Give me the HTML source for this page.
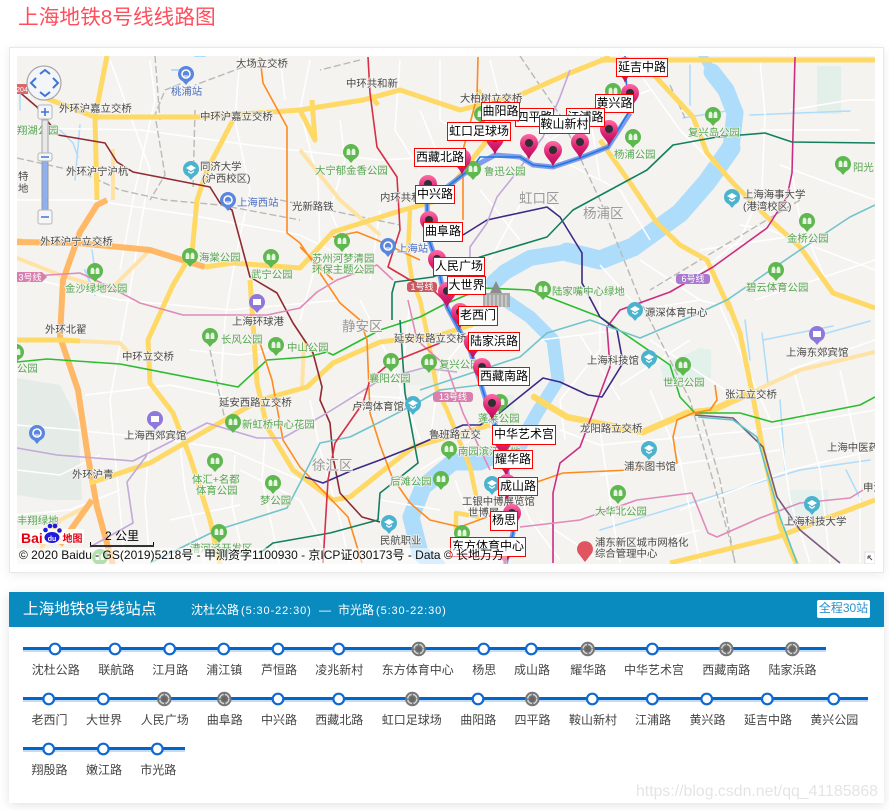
<!DOCTYPE html>
<html lang="zh-CN"><head><meta charset="utf-8"><title>上海地铁8号线线路图</title>
<style>
html,body{margin:0;padding:0;background:#fff;width:889px;height:810px;overflow:hidden}
body{position:relative;font-family:"Liberation Sans","Noto Sans CJK SC",sans-serif}
h1{position:absolute;left:18px;top:4px;margin:0;font-weight:400;font-size:20.7px;line-height:28px;color:#ff4d5c;white-space:nowrap}
.card1{position:absolute;left:9px;top:47px;width:875px;height:526px;box-sizing:border-box;background:#fff;border:1px solid #e8e8e8;box-shadow:0 2px 10px rgba(0,0,0,.08)}
.card2{position:absolute;left:9px;top:592px;width:875px;height:211px;background:#fff;box-shadow:0 2px 10px rgba(0,0,0,.12)}
.bar{position:absolute;left:9px;top:592px;width:875px;height:35px;background:#0a8bc0}
.t{position:absolute;color:#fff;white-space:nowrap}
.tag{position:absolute;left:817px;top:600px;width:53px;height:18px;background:#fff;border-radius:2px;color:#2a90c8;font-size:12px;line-height:17px;text-align:center}
#map{position:absolute;left:17px;top:56px;width:858px;height:508px;overflow:hidden;background:#f4f3f0}
#map svg{position:absolute;left:0;top:0}
.l{position:absolute;box-sizing:border-box;background:#fff;border:1px solid #f00;color:#000;font-size:12px;line-height:16px;text-align:center;white-space:nowrap;overflow:hidden}
.wm{position:absolute;left:636px;top:781px;font-size:15.85px;line-height:22px;color:rgba(170,170,170,.32);white-space:nowrap}
.copy{position:absolute;z-index:5;left:0;top:492px;width:490px;height:16px;padding-left:2px;box-sizing:border-box;background:rgba(255,255,255,.55);color:#111;font-size:12px;line-height:15px;white-space:nowrap}
</style></head><body>
<h1>上海地铁8号线线路图</h1>
<div class="card1"></div>
<div id="map">
<svg width="858" height="508" viewBox="17 56 858 508" xmlns="http://www.w3.org/2000/svg">
<defs>
<linearGradient id="mg" x1="0" y1="0" x2="0" y2="1"><stop offset="0" stop-color="#ff6aa5"/><stop offset=".55" stop-color="#d8206f"/><stop offset="1" stop-color="#b80d58"/></linearGradient>
<g id="m"><path d="M0,17C-2,10-9,7-9,0A9,9 0 1 1 9,0C9,7 2,10 0,17Z" fill="url(#mg)"/><circle r="4" cy="0" fill="#2f2f33"/></g>
<g id="pg"><circle r="8" fill="#5eb84f"/><path d="M0,11L-5,5L5,5Z" fill="#5eb84f"/><path d="M-4.4,3V-1A2,3.5 0 0 1 -0.6,-1V3ZM0.6,3V-1A2,3.5 0 0 1 4.4,-1V3Z" fill="#e7f5e3"/></g>
<g id="pb"><circle r="8" fill="#5a86e0"/><path d="M0,11L-5,5L5,5Z" fill="#5a86e0"/><circle r="4" fill="none" stroke="#fff" stroke-width="1.6"/><path d="M-2,2h4" stroke="#fff"/></g>
<g id="pt"><circle r="8" fill="#4cb3cf"/><path d="M0,11L-5,5L5,5Z" fill="#4cb3cf"/><path d="M-5,-1L0,-4L5,-1L0,2Z M-3,1.5L0,3.5L3,1.5V3L0,5L-3,3Z" fill="#fff"/></g>
<g id="pp"><circle r="8" fill="#8f78dc"/><path d="M0,11L-5,5L5,5Z" fill="#8f78dc"/><path d="M-4,-3h8v6h-8z" fill="#fff"/></g>
</defs>
<!-- park tints -->
<path d="M17,378L60,385L78,420L82,500L50,500L17,495Z" fill="#e5ebe6"/>
<path d="M817,66h24v48h-24z" fill="#e3f0ea"/>
<path d="M660,366L700,348L711,350L711,378L665,385Z" fill="#e2f1ea"/>
<path d="M400,370h40v15h-40z" fill="#eef0ec"/>
<path d="M788,490h40v30h-40z" fill="#e6f1ee"/>
<path d="M500,395h14v30h-14z" fill="#e7f1e6"/>
<!-- water -->
<g fill="none" stroke="#aedcfb" stroke-linejoin="round" stroke-linecap="round">
<path d="M703,56L712,72" stroke-width="9"/>
<path d="M712,72L726,90L735,113L731,148" stroke-width="17"/>
<path d="M731,148L707,182L680,213L633,247L600,260L567,252" stroke-width="19"/>
<path d="M567,252L530,258L505,272L494,282" stroke-width="16"/>
<path d="M505,300L530,317L553,340L558,380L537,413L520,443" stroke-width="13"/>
<path d="M520,443L480,462L453,462L423,487L411,517L420,553L437,566" stroke-width="17"/>
<path d="M92,250l2,14M55,125l18,18l5,14M80,125l-5,55M20,90l0,20" stroke-width="1.5"/>
<path d="M690,65l0,40M683,118l50,-8M750,115l100,-4M745,320l5,40M762,333l6,50M763,340l70,-14M820,335l50,-14M600,530l100,-30l100,-30l70,-10M780,400l5,70M846,470l15,30" stroke-width="1.5"/>
<path d="M172,70h14M195,56l10,0M85,270l10,25" stroke-width="2"/>
</g>
<!-- minor roads -->
<g fill="none" stroke="#fff" stroke-width="1.5">
<path d="M17,128L140,130L250,145L380,160L470,155M110,60L150,170L130,290L110,400L125,565"/>
<path d="M17,200L90,200L190,215L300,235L340,255M17,275L120,300L230,310L340,300"/>
<path d="M150,60L155,100L135,190L120,270M240,56L235,120L250,190L235,260L225,320L220,400M310,60L300,110L318,180L320,250L300,320"/>
<path d="M17,425L75,430L170,440L230,450L300,480M85,395L170,385L240,400M190,350L240,355L300,345M150,430L145,500L150,565M180,445L185,490L205,565"/>
<path d="M17,470L60,475L100,455M17,515L70,510L120,490M235,455L232,505L245,565M265,440L262,480L280,565M310,400L320,450L340,520L350,565"/>
<path d="M340,120L345,160L330,210L350,260M400,60L395,130L420,170M440,60L440,120L470,140M490,60L500,100L550,140L600,110L650,90M560,160L620,190L650,240M540,190L570,230M590,115L600,180"/>
<path d="M630,60L680,130L720,170M760,60L765,115L762,190L740,240L690,280M790,110L850,100L875,100M760,130L860,130M790,160L800,220L830,290M740,225L770,230L875,270M780,165L875,200"/>
<path d="M700,250L800,235M640,260L700,300L720,305M755,300L875,260M650,340L740,400M720,306L770,420M620,385L690,340M790,370L875,340M795,375L820,470L830,563"/>
<path d="M600,430L610,500L620,563M650,390L680,460L700,563M560,430L600,445L760,430L875,410M600,475L780,450M540,520L600,560M680,510L790,470L875,450"/>
<path d="M780,430L790,500L810,563M720,480L735,563M840,370L860,460L860,563M640,545L700,530M480,190L520,240M520,205L490,260M420,110L440,160M380,210L370,280M410,300L400,400"/>
<path d="M480,320L440,370L430,440M360,300L390,360L420,440M350,395L440,400M420,470L470,440M500,450L530,520L560,560M565,440L560,400L600,350L600,300M540,340L620,330M455,480L470,520M380,500L440,510"/>
<path d="M600,265L640,310L700,300M580,335L620,400M280,56L285,100M240,470L300,500L330,560M170,520L240,505"/>
</g>
<!-- rail -->
<g fill="none" stroke="#b9b9b6" stroke-width="1.4" stroke-dasharray="7 3">
<path d="M17,158L80,172L120,190L165,200L220,205L300,220M190,80L165,90L155,115L165,175L150,200M155,56L160,120"/>
<path d="M195,110L193,190M210,350L225,420M262,60L195,85M360,60L320,70M520,56L560,115L600,200L640,300L690,400L730,540L735,563M670,85L685,118M280,200L400,225"/>
<path d="M700,410L720,480L735,563M800,200L700,260L650,290"/>
</g>
<!-- main roads -->
<g fill="none" stroke-linejoin="round" stroke-linecap="butt">
<g stroke="#ffe3a6" stroke-width="4">
<path d="M113,149L113,200M17,258L60,275L110,290L150,250M80,341L120,343L135,360M40,550L60,520L90,505M750,393L800,370L875,352M300,150L340,200L380,235M17,240h5"/>
<path d="M304,340l-2,50"/>
</g>
<g stroke="#ffb866" stroke-width="6">
<path d="M107,200L97,205L80,232L63,280L60,337L78,390L88,457L97,507L113,565"/>
<path d="M17,242L77,243L150,250L205,267"/>
<path d="M60,545L92,500"/>
</g>
<g stroke="#ffd966" stroke-width="5">
<path d="M107,56L95,117L97,200"/>
<path d="M43,97L95,117L143,117L200,117L300,110L363,100L400,90L460,110L520,95L570,73L610,57"/>
<path d="M233,120L207,170L197,200L192,253L173,285L148,340L150,383L173,413L190,457L210,520L220,565"/>
<path d="M205,267L233,263L300,268L333,232L403,210"/>
<path d="M17,340L63,340L80,341"/>
<path d="M90,483L150,463L207,430L260,400L307,387L333,363L380,342L440,335L480,322"/>
<path d="M250,280L257,383L267,427L293,470L333,500L350,497L380,473L413,447L490,425"/>
<path d="M534,397L567,417L597,423L643,432L687,413L713,410L750,393" stroke-width="6.5" stroke-linecap="round"/>
<path d="M727,300L740,333L753,397L763,450L780,527L797,565"/>
<path d="M600,140L633,187L657,223L680,245L707,260L730,310"/>
<path d="M640,60L693,117L707,153L733,183L767,217L800,247L833,293L875,308"/>
<path d="M600,60L713,60L875,60"/>
<path d="M670,563L777,537L875,500"/>
<path d="M478,90L495,130L460,175L440,200L403,210"/>
<path d="M410,210L408,253L412,280L420,300L427,333L437,390L447,410L470,467L477,500" stroke-width="4.5"/>
<path d="M456,530V513L480,517" stroke-width="4.5"/>
<path d="M370,95L378,105"/>
<path d="M300,110L315,140L312,100"/>
</g>
</g>
<!-- metro lines -->
<g fill="none" stroke-width="1.6" stroke-linejoin="round">
<path stroke="#8f2a30" d="M17,90L37,107L58,135L105,143L117,162L133,172L210,187L220,203L232,210L250,277L277,293L293,323L313,353L322,387L320,400L330,423L333,457L340,493L362,517L380,522"/>
<path stroke="#2bbd2e" d="M17,362L47,359L120,364L238,387L267,360L307,357L327,352L333,355L380,330L420,317L443,305L483,288L530,290L600,317L670,365L680,397L695,413L740,413L772,422L860,405L875,397"/>
<path stroke="#ff8a1e" d="M260,57L263,83L287,127L287,233L300,243L340,303L360,320L367,340L370,413L380,445L392,477L410,503L430,520L460,527L487,517M333,237L357,232L377,240L420,260M478,57L477,97L463,150L463,220M260,343L272,380L283,440L300,467L348,517L362,563M537,482L563,473L630,470L677,463L673,437L677,420L693,413L710,410L717,400L715,385M333,280L300,247"/>
<path stroke="#cc2d82" d="M795,57L792,173L787,197L767,228L713,267L670,292L620,310L607,327L610,367L580,447L560,463L553,493L553,563"/>
<path stroke="#3d2a87" d="M463,235L487,220L547,207L560,217L582,253L582,283L600,317L617,330L623,363L602,397L588,395L560,382L543,378L497,415L480,425L463,425L413,447L380,460L353,470L323,483L305,477"/>
<path stroke="#12805f" d="M392,320L392,293L395,282L433,277L480,257L547,237L573,210L647,170L673,145L717,137L765,133L792,142L875,143M400,320L405,393L418,463L380,493L378,520L330,533L273,543L260,553"/>
<path stroke="#72c4cc" d="M150,563L217,530L287,508L300,483L320,443L350,437L380,422L417,403L440,390L480,385M520,357L547,333L590,320L640,338L690,317L727,300L800,250L850,217L875,205M420,390L520,357"/>
<path stroke="#df8ab8" d="M17,277L80,273L110,287L140,303L183,315L267,315L300,308L317,292L337,280L377,265L393,280M408,300L417,340L447,367L463,413L490,470M520,527L580,520L637,500L692,493L708,533L717,537L760,518L800,503L850,498L863,490"/>
<path stroke="#c3a8d8" d="M17,448L57,455L133,461L207,423L257,438L283,438L327,413L380,380L423,368L457,372M570,70L560,97L543,137L513,177L497,197L487,223L470,247L470,263M147,455L127,482L133,523L90,547"/>
<path stroke="#d62f46" d="M368,57L370,93L377,147L397,177L400,230L388,267L410,280L433,290L447,303M440,343L390,363L370,380L363,403L335,443L328,480L323,563"/>
<path stroke="#7a5a80" d="M695,415L733,418L763,447L777,497L800,530L840,563"/>
<path stroke="#5cc5c8" d="M698,417L733,420L757,437L780,517L797,563"/>
</g>
<!-- line 8 route -->
<g fill="none" stroke-linejoin="round">
<path stroke="#6c8cea" stroke-opacity=".85" stroke-width="5" d="M630,113L608,147L580,158L553,167L533,165L520,157L495,155L473,167L447,187L427,203L428,237L437,263L447,307L470,350L490,413L503,443L513,513L513,533L505,565"/>
<path stroke="#1c7ae0" stroke-width="1.6" d="M625,56L628,113L608,147L580,158L553,167L533,165L520,157L480,157L473,167L447,187L427,203L428,237L437,263L447,307L470,350L490,413L503,443L513,513L513,533L505,565"/>
</g>
<!-- badges -->
<g font-size="9" text-anchor="middle" fill="#fff">
<rect x="407" y="282" width="30" height="10" rx="3" fill="#c85a62"/><text x="422" y="290">1号线</text>
<rect x="433" y="392" width="40" height="10" rx="3" fill="#d87fae"/><text x="453" y="400">13号线</text>
<rect x="676" y="274" width="34" height="10" rx="3" fill="#a97ad0"/><text x="693" y="282">6号线</text>
<path d="M17,272h25l5,5l-5,5h-25z" fill="#d87fae"/><text x="30" y="280.5">3号线</text>
<rect x="17" y="84" width="11" height="10" fill="#d9686c"/><text x="22" y="92" font-size="7">204</text>
</g>
<!-- people's square building -->
<g fill="#a9a9a9"><path d="M483,307h27v-14h-27z"/><path d="M490,293l6,-12l6,12z" fill="#8c8c8c"/><path d="M486,295v12M490,295v12M494,295v12M498,295v12M502,295v12M506,295v12" stroke="#e5e5e5"/></g>
<!-- POI pins -->
<use href="#pg" x="190" y="256"/><use href="#pg" x="271" y="257"/><use href="#pg" x="95" y="271"/><use href="#pg" x="351" y="152"/><use href="#pg" x="342" y="241"/><use href="#pg" x="473" y="169"/><use href="#pg" x="543" y="289"/><use href="#pg" x="482" y="114"/><use href="#pg" x="633" y="137"/><use href="#pg" x="613" y="91"/><use href="#pg" x="713" y="115"/><use href="#pg" x="843" y="164"/><use href="#pg" x="807" y="221"/><use href="#pg" x="776" y="270"/><use href="#pg" x="683" y="365"/><use href="#pg" x="618" y="493"/><use href="#pg" x="210" y="336"/><use href="#pg" x="276" y="345"/><use href="#pg" x="233" y="422"/><use href="#pg" x="215" y="461"/><use href="#pg" x="273" y="483"/><use href="#pg" x="219" y="532"/><use href="#pg" x="16" y="352"/><use href="#pg" x="100" y="557"/><use href="#pg" x="391" y="361"/><use href="#pg" x="429" y="362"/><use href="#pg" x="449" y="449"/><use href="#pg" x="441" y="479"/><use href="#pg" x="462" y="533"/><use href="#pg" x="500" y="402"/>
<use href="#pb" x="186" y="74"/><use href="#pb" x="228" y="200"/><use href="#pb" x="388" y="246"/><use href="#pb" x="37" y="433"/>
<use href="#pt" x="191" y="169"/><use href="#pt" x="732" y="197"/><use href="#pt" x="389" y="523"/><use href="#pt" x="413" y="404"/><use href="#pt" x="635" y="310"/><use href="#pt" x="649" y="358"/><use href="#pt" x="649" y="449"/><use href="#pt" x="812" y="504"/><use href="#pt" x="492" y="484"/>
<use href="#pp" x="257" y="302"/><use href="#pp" x="155" y="419"/><use href="#pp" x="817" y="334"/>
<path d="M585,562L578,553A8,8 0 1 1 592,553Z" fill="#e0555f"/>
<!-- labels -->
<g font-size="10.4" fill="#4a4a4a" stroke="#f4f3f0" stroke-width="1.6" paint-order="stroke" font-family="'Liberation Sans','Noto Sans CJK SC',sans-serif">
<text x="236" y="67">大场立交桥</text><text x="59" y="112">外环沪嘉立交桥</text><text x="200" y="120">中环沪嘉立交桥</text><text x="66" y="175">外环沪宁沪杭</text><text x="18" y="180">特</text><text x="18" y="192">地</text><text x="40" y="245">外环沪宁立交桥</text><text x="346" y="87">中环共和新</text><text x="460" y="102">大柏树立交桥</text><text x="380" y="201">内环共和新</text><text x="292" y="210">光新路铁</text><text x="200" y="170">同济大学</text><text x="202" y="182">(沪西校区)</text><text x="45" y="333">外环北翟</text><text x="122" y="360">中环立交桥</text><text x="232" y="325">上海环球港</text><text x="219" y="406">延安西路立交桥</text><text x="124" y="439">上海西郊宾馆</text><text x="72" y="478">外环沪青</text><text x="352" y="410">卢湾体育馆</text><text x="394" y="342">延安东路立交桥</text><text x="429" y="438">鲁班路立交</text><text x="462" y="505">工银中博展览馆</text><text x="468" y="516">世博展</text><text x="380" y="544">民航职业</text><text x="587" y="364">上海科技馆</text><text x="580" y="432">龙阳路立交桥</text><text x="624" y="470">浦东图书馆</text><text x="725" y="398">张江立交桥</text><text x="786" y="356">上海东郊宾馆</text><text x="827" y="451">上海中医药</text><text x="784" y="525">上海科技大学</text><text x="743" y="198">上海海事大学</text><text x="743" y="210">(港湾校区)</text><text x="595" y="546">浦东新区城市网格化</text><text x="595" y="557">综合管理中心</text><text x="645" y="316">源深体育中心</text><text x="863" y="491">申江</text>
</g>
<g font-size="10.4" fill="#4a6fc0" stroke="#f4f3f0" stroke-width="1.6" paint-order="stroke">
<text x="237" y="206">上海西站</text><text x="171" y="95">桃浦站</text><text x="397" y="252">上海站</text>
</g>
<g font-size="13.5" fill="#9a9a9a" stroke="#f4f3f0" stroke-width="1.6" paint-order="stroke">
<text x="519" y="203">虹口区</text><text x="583" y="218">杨浦区</text><text x="342" y="331">静安区</text><text x="312" y="470">徐汇区</text>
</g>
<g font-size="10.4" fill="#57a653" stroke="#f4f3f0" stroke-width="1.6" paint-order="stroke">
<text x="315" y="174">大宁郁金香公园</text><text x="312" y="262">苏州河梦清园</text><text x="312" y="273">环保主题公园</text><text x="484" y="175">鲁迅公园</text><text x="552" y="295">陆家嘴中心绿地</text><text x="614" y="158">杨浦公园</text><text x="688" y="136">复兴岛公园</text><text x="853" y="171">阳光</text><text x="787" y="242">金桥公园</text><text x="746" y="291">碧云体育公园</text><text x="663" y="386">世纪公园</text><text x="595" y="515">大华北公园</text><text x="199" y="261">海棠公园</text><text x="251" y="278">武宁公园</text><text x="17" y="134">翔湖公园</text><text x="65" y="292">金沙绿地公园</text><text x="221" y="343">长风公园</text><text x="287" y="351">中山公园</text><text x="17" y="372">公园</text><text x="242" y="428">新虹桥中心花园</text><text x="192" y="483">体汇+名都</text><text x="196" y="494">体育公园</text><text x="260" y="504">梦公园</text><text x="190" y="552">漕河泾开发区</text><text x="439" y="368">复兴公园</text><text x="369" y="382">襄阳公园</text><text x="458" y="455">南园滨江绿地</text><text x="390" y="485">后滩公园</text><text x="478" y="422">蓬莱公园</text><text x="17" y="524">丰翔绿地</text>
</g>
<!-- markers -->
<use href="#m" x="625" y="66"/><use href="#m" x="630" y="93"/><use href="#m" x="609" y="129"/><use href="#m" x="580" y="142"/><use href="#m" x="553" y="150"/><use href="#m" x="529" y="143"/><use href="#m" x="495" y="138"/><use href="#m" x="462" y="158"/><use href="#m" x="428" y="184"/><use href="#m" x="429" y="220"/><use href="#m" x="437" y="259"/><use href="#m" x="447" y="291"/><use href="#m" x="460" y="312"/><use href="#m" x="473" y="342"/><use href="#m" x="482" y="367"/><use href="#m" x="492" y="403"/><use href="#m" x="503" y="440"/><use href="#m" x="506" y="459"/><use href="#m" x="507" y="483"/><use href="#m" x="512" y="513"/><use href="#m" x="505" y="548"/>
<!-- zoom/nav controls -->
<circle cx="44" cy="83" r="17" fill="#f4f5f8" stroke="#a8a8a8" stroke-width="1.2"/>
<g fill="none" stroke="#3f74d8" stroke-width="2"><path d="M40,74l5,-4l5,4M40,92l5,4l5,-4M36,78l-5,5l5,5M53,78l5,5l-5,5"/></g>
<rect x="42" y="120" width="6" height="92" fill="#e8e8e8" stroke="#a5a5a5"/>
<rect x="42" y="160" width="6" height="52" fill="#8fb0ee" stroke="#999"/>
<g fill="#f6f6f6" stroke="#b5b5b5"><rect x="38" y="105" width="14" height="14" rx="2"/><rect x="38" y="153" width="14" height="8" rx="2"/><rect x="38" y="210" width="14" height="14" rx="2"/></g>
<path d="M41,112h8M45,108v8M41,157h8M41,217h8" stroke="#3f74d8" stroke-width="1.6"/>
<!-- logo -->
<rect x="19" y="529" width="65" height="15" rx="2" fill="#fff" fill-opacity=".85"/>
<text x="21" y="543" font-size="14" font-weight="700" fill="#e60012">Bai</text>
<text x="62.5" y="542" font-size="10" font-weight="700" fill="#e60012">地图</text>
<g fill="#2319dc"><ellipse cx="52" cy="537.5" rx="7.5" ry="5.5"/><circle cx="45.5" cy="530" r="2.3"/><circle cx="50" cy="526" r="2.3"/><circle cx="55" cy="526" r="2.3"/><circle cx="59.5" cy="530.5" r="2.3"/></g>
<text x="52" y="541" font-size="7" font-weight="700" fill="#fff" text-anchor="middle">du</text>
<!-- scale -->
<text x="105" y="540" font-size="12" fill="#000">2 公里</text>
<path d="M90.5,542v4.5h63v-4.5" fill="none" stroke="#000" stroke-width="1"/><path d="M90,546h64" stroke="#333" stroke-width="2"/>
<!-- corner -->
<rect x="865" y="552" width="10" height="12" fill="#fff" stroke="#ddd"/><path d="M868,556l4,4M868,556h3M868,556v3" stroke="#555" fill="none"/>
</svg>
<div class="copy">© 2020 Baidu - GS(2019)5218号 - 甲测资字1100930 - 京ICP证030173号 - Data © 长地万方</div>
<!-- station boxes, offset by map origin (17,56) -->
<div class="l" style="left:599px;top:2px;width:52px;height:19px">延吉中路</div>
<div class="l" style="left:578px;top:38px;width:39px;height:19px">黄兴路</div>
<div class="l" style="left:549px;top:52px;width:39px;height:19px">江浦路</div>
<div class="l" style="left:498px;top:52px;width:39px;height:19px">四平路</div>
<div class="l" style="left:464px;top:46px;width:39px;height:19px">曲阳路</div>
<div class="l" style="left:522px;top:59px;width:51px;height:19px">鞍山新村</div>
<div class="l" style="left:430px;top:66px;width:64px;height:19px">虹口足球场</div>
<div class="l" style="left:397px;top:92px;width:52px;height:19px">西藏北路</div>
<div class="l" style="left:398px;top:129px;width:40px;height:19px">中兴路</div>
<div class="l" style="left:406px;top:166px;width:40px;height:20px">曲阜路</div>
<div class="l" style="left:416px;top:201px;width:52px;height:19px">人民广场</div>
<div class="l" style="left:430px;top:220px;width:39px;height:19px">大世界</div>
<div class="l" style="left:441px;top:250px;width:40px;height:20px">老西门</div>
<div class="l" style="left:451px;top:276px;width:52px;height:19px">陆家浜路</div>
<div class="l" style="left:461px;top:311px;width:52px;height:19px">西藏南路</div>
<div class="l" style="left:475px;top:369px;width:64px;height:20px">中华艺术宫</div>
<div class="l" style="left:476px;top:394px;width:40px;height:19px">耀华路</div>
<div class="l" style="left:481px;top:421px;width:40px;height:19px">成山路</div>
<div class="l" style="left:473px;top:455px;width:28px;height:20px">杨思</div>
<div class="l" style="left:433px;top:481px;width:76px;height:20px">东方体育中心</div>
</div>
<div class="card2"></div>
<div class="bar"></div>
<div class="t" style="left:23px;top:599px;font-size:15.6px;line-height:22px">上海地铁8号线站点</div>
<div class="t" style="left:191px;top:602px;font-size:12px;line-height:17px">沈杜公路</div>
<div class="t" style="left:241px;top:603px;font-size:11px;line-height:16px;letter-spacing:.9px">(5:30-22:30)</div>
<div class="t" style="left:319px;top:602px;font-size:12px;line-height:17px">—</div>
<div class="t" style="left:338px;top:602px;font-size:12px;line-height:17px">市光路</div>
<div class="t" style="left:376px;top:603px;font-size:11px;line-height:16px;letter-spacing:.9px">(5:30-22:30)</div>
<div class="tag">全程30站</div>
<svg style="position:absolute;left:0;top:0" width="889" height="810" viewBox="0 0 889 810" xmlns="http://www.w3.org/2000/svg">
<defs>
<g id="s"><circle r="5.3" fill="#fff" stroke="#0f69cf" stroke-width="2.2"/></g>
<g id="x"><circle r="7.2" fill="#767676"/><circle r="4.6" fill="none" stroke="#d9d9d9" stroke-width="1.4" stroke-dasharray="6 1.4"/><circle r="2.5" fill="#666"/></g>
</defs>
<g fill="none">
<path d="M23,649.5H826M23,699.5H868M23,749.5H185" stroke="#c4dbf3" stroke-width="5"/>
<path d="M23,648.5H826M23,698.5H868M23,748.5H185" stroke="#0066cc" stroke-width="3"/>
</g>
<use href="#s" x="55" y="649"/><use href="#s" x="115" y="649"/><use href="#s" x="169.7" y="649"/><use href="#s" x="223.7" y="649"/><use href="#s" x="278" y="649"/><use href="#s" x="338.7" y="649"/><use href="#x" x="418.7" y="649"/><use href="#s" x="483.7" y="649"/><use href="#s" x="531.3" y="649"/><use href="#x" x="587.7" y="649"/><use href="#s" x="652.3" y="649"/><use href="#x" x="726.3" y="649"/><use href="#x" x="792.3" y="649"/>
<use href="#s" x="48.7" y="699"/><use href="#s" x="103.3" y="699"/><use href="#x" x="164.3" y="699"/><use href="#x" x="224.3" y="699"/><use href="#s" x="278" y="699"/><use href="#s" x="338.7" y="699"/><use href="#x" x="412.3" y="699"/><use href="#s" x="478" y="699"/><use href="#x" x="532.3" y="699"/><use href="#s" x="592.3" y="699"/><use href="#s" x="652.3" y="699"/><use href="#s" x="706.7" y="699"/><use href="#s" x="767.3" y="699"/><use href="#s" x="833.7" y="699"/>
<use href="#s" x="48.7" y="749"/><use href="#s" x="103.3" y="749"/><use href="#s" x="157.3" y="749"/>
<g font-size="12" fill="#444" text-anchor="middle">
<text x="55.7" y="674">沈杜公路</text><text x="116.3" y="674">联航路</text><text x="170.3" y="674">江月路</text><text x="224.3" y="674">浦江镇</text><text x="279" y="674">芦恒路</text><text x="339.3" y="674">凌兆新村</text><text x="417.7" y="674">东方体育中心</text><text x="484.3" y="674">杨思</text><text x="532" y="674">成山路</text><text x="588.3" y="674">耀华路</text><text x="654" y="674">中华艺术宫</text><text x="726.3" y="674">西藏南路</text><text x="792.5" y="674">陆家浜路</text>
<text x="49.5" y="724">老西门</text><text x="104" y="724">大世界</text><text x="164.7" y="724">人民广场</text><text x="224.7" y="724">曲阜路</text><text x="279" y="724">中兴路</text><text x="339.3" y="724">西藏北路</text><text x="411.7" y="724">虹口足球场</text><text x="478.3" y="724">曲阳路</text><text x="532.5" y="724">四平路</text><text x="593" y="724">鞍山新村</text><text x="653" y="724">江浦路</text><text x="707.5" y="724">黄兴路</text><text x="768" y="724">延吉中路</text><text x="834.3" y="724">黄兴公园</text>
<text x="49.5" y="774">翔殷路</text><text x="104" y="774">嫩江路</text><text x="158.3" y="774">市光路</text>
</g>
</svg>
<div class="wm">https://blog.csdn.net/qq_41185868</div>
</body></html>
